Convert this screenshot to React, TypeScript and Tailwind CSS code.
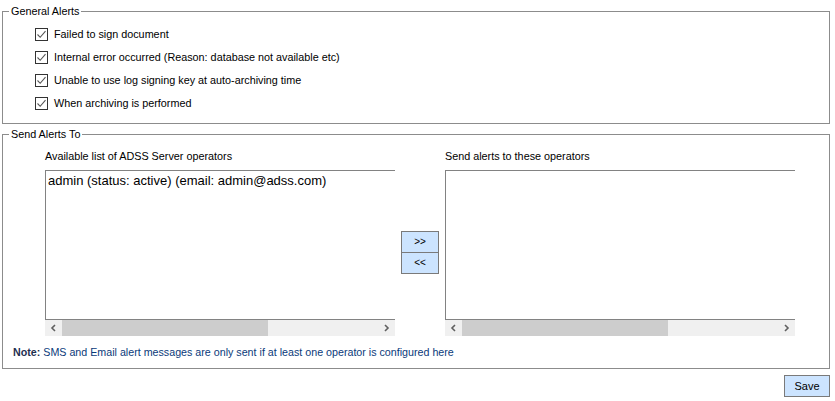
import React from "react";

const font = { fontFamily: '"Liberation Sans", Arial, sans-serif' };

function Check({ label }: { label: string }) {
  return (
    <div className="flex items-center h-[23px]">
      <div className="w-[13px] h-[13px] border border-[#333333] bg-white flex items-center justify-center">
        <svg width="11" height="11" viewBox="0 0 11 11">
          <path d="M1.5 5.5 L4.2 8.3 L9.5 2.2" fill="none" stroke="#555" strokeWidth="1.1" />
        </svg>
      </div>
      <span className="ml-[6px] text-[10.8px] text-black">{label}</span>
    </div>
  );
}

function ScrollBar({ thumbLeft, thumbWidth }: { thumbLeft: number; thumbWidth: number }) {
  return (
    <div className="relative h-[16px] bg-[#f0f0f0] w-full">
      <svg className="absolute left-[5px] top-[4px]" width="7" height="8" viewBox="0 0 7 8">
        <path d="M5 1 L2 4 L5 7" fill="none" stroke="#606060" strokeWidth="1.6" />
      </svg>
      <div className="absolute top-0 h-[16px] bg-[#cdcdcd]" style={{ left: thumbLeft, width: thumbWidth }} />
      <svg className="absolute right-[5px] top-[4px]" width="7" height="8" viewBox="0 0 7 8">
        <path d="M2 1 L5 4 L2 7" fill="none" stroke="#606060" strokeWidth="1.6" />
      </svg>
    </div>
  );
}

function ListBox({ children, thumbLeft, thumbWidth }: { children?: React.ReactNode; thumbLeft: number; thumbWidth: number }) {
  return (
    <div className="w-[350px] flex flex-col">
      <div className="h-[150px] border-t border-l border-b border-[#828282] bg-white pl-[2px] pt-[1px]">
        {children}
      </div>
      <ScrollBar thumbLeft={thumbLeft} thumbWidth={thumbWidth} />
    </div>
  );
}

export default function App() {
  return (
    <div className="w-[835px] h-[401px] bg-white relative overflow-hidden" style={font}>
      <fieldset className="ml-[2px] w-[828px] h-[121px] mt-[3px] border border-[#8c8c8c]">
        <legend className="ml-[6px] px-[2px] text-[10.8px] leading-[16px] text-black">General Alerts</legend>
        <div className="pl-[32px] pt-[4px] flex flex-col">
          <Check label="Failed to sign document" />
          <Check label="Internal error occurred (Reason: database not available etc)" />
          <Check label="Unable to use log signing key at auto-archiving time" />
          <Check label="When archiving is performed" />
        </div>
      </fieldset>
      <fieldset className="ml-[2px] w-[828px] h-[243px] mt-[2px] border border-[#8c8c8c]">
        <legend className="ml-[6px] px-[2px] text-[10.8px] leading-[16px] text-black">Send Alerts To</legend>
        <div className="flex pl-[42px] pt-[7px]">
          <div className="flex flex-col">
            <div className="text-[10.8px] leading-[14px] text-black mb-[7px]">Available list of ADSS Server operators</div>
            <ListBox thumbLeft={17} thumbWidth={206}>
              <div className="text-[13px] leading-[17px] text-black">admin (status: active) (email: admin@adss.com)</div>
            </ListBox>
          </div>
          <div className="w-[50px] flex flex-col items-center pt-[82px]">
            <button className="w-[38px] h-[22px] bg-[#cce4ff] border border-[#7a7a7a] text-[10px] text-black leading-none">&gt;&gt;</button>
            <button className="w-[38px] h-[22px] bg-[#cce4ff] border border-[#7a7a7a] text-[10px] text-black leading-none -mt-[1px]">&lt;&lt;</button>
          </div>
          <div className="flex flex-col">
            <div className="text-[10.8px] leading-[14px] text-black mb-[7px]">Send alerts to these operators</div>
            <ListBox thumbLeft={17} thumbWidth={206} />
          </div>
        </div>
        <div className="pl-[10px] pt-[9px] text-[10.7px] text-[#0a3a7a] leading-[14px]">
          <span className="font-bold text-[#1f2f4f]">Note:</span> SMS and Email alert messages are only sent if at least one operator is configured here
        </div>
      </fieldset>
      <div className="flex justify-end pr-[5px] mt-[6px]">
        <button className="w-[46px] h-[22px] bg-[#cce4ff] border border-[#7a7a7a] text-[11px] text-black">Save</button>
      </div>
    </div>
  );
}
